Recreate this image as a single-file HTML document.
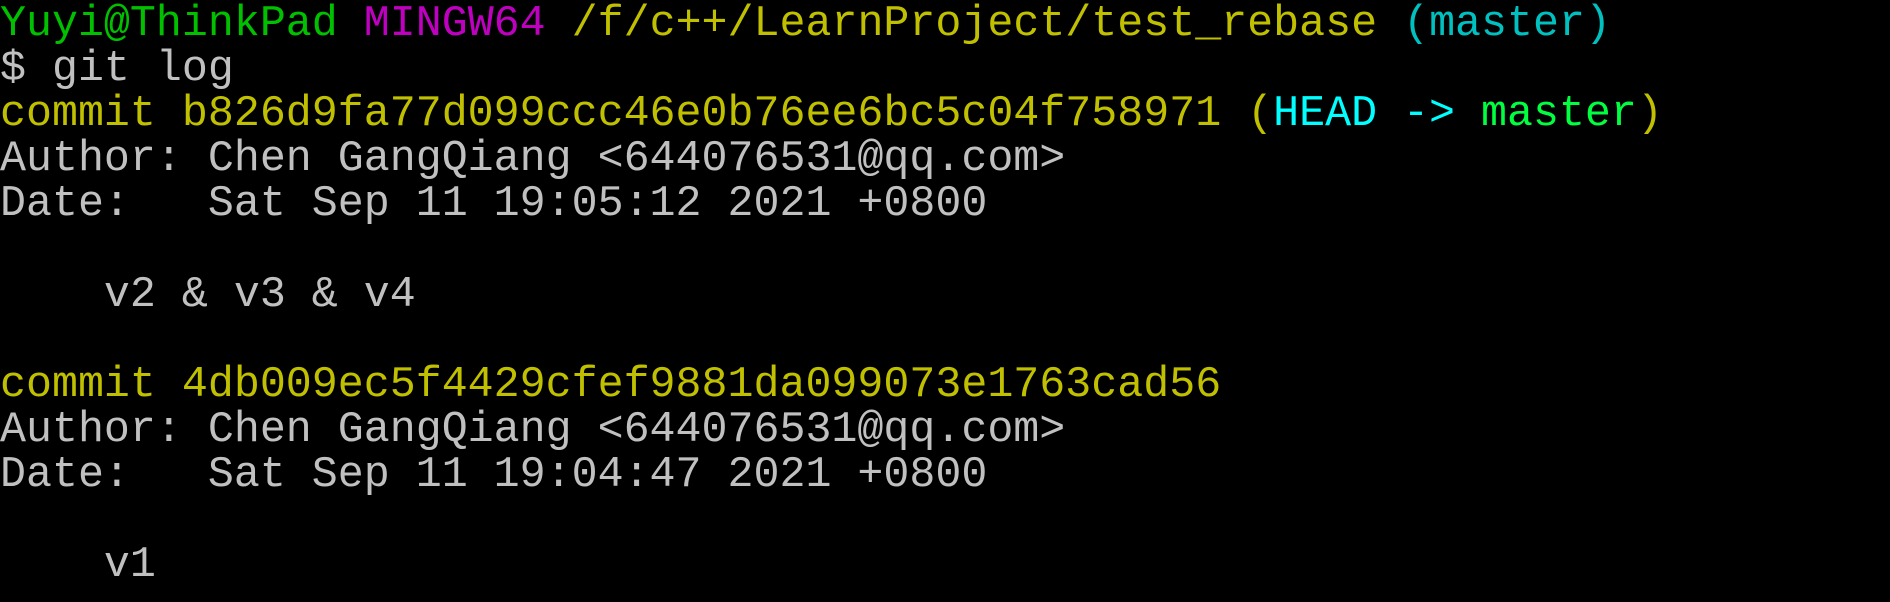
<!DOCTYPE html>
<html><head><style>
html,body{margin:0;background:#000;width:1890px;height:602px;overflow:hidden}
pre{margin:0;padding:2px 0 0 0;font-family:"Liberation Mono",monospace;font-size:43.3px;line-height:45.1px;color:#c0c0c0;white-space:pre}
.g{color:#00c000}.m{color:#c000c0}.y{color:#c0c000}.c{color:#00c0c0}.bc{color:#00ffff}.bg{color:#00ff40}
</style></head><body><pre><span class="g">Yuyi@ThinkPad</span> <span class="m">MINGW64</span> <span class="y">/f/c++/LearnProject/test_rebase</span> <span class="c">(master)</span>
$ git log
<span class="y">commit b826d9fa77d099ccc46e0b76ee6bc5c04f758971 (</span><span class="bc">HEAD -&gt; </span><span class="bg">master</span><span class="y">)</span>
Author: Chen GangQiang &lt;644076531@qq.com&gt;
Date:   Sat Sep 11 19:05:12 2021 +0800

    v2 &amp; v3 &amp; v4

<span class="y">commit 4db009ec5f4429cfef9881da099073e1763cad56</span>
Author: Chen GangQiang &lt;644076531@qq.com&gt;
Date:   Sat Sep 11 19:04:47 2021 +0800

    v1
</pre></body></html>
